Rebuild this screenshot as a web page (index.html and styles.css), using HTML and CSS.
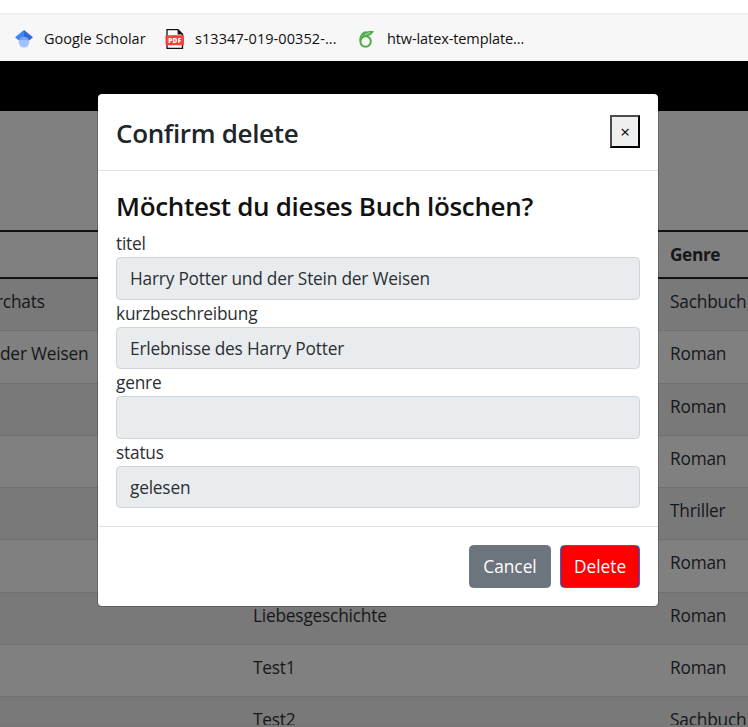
FILE: index.html
```html
<!DOCTYPE html>
<html lang="de">
<head>
<meta charset="utf-8">
<title>Confirm delete</title>
<link rel="stylesheet" href="styles.css">
</head>
<body>
<header class="bookmarks">
  <span class="bookmark scholar">
    <svg width="20" height="20" viewBox="0 0 20 20"><path fill="#4285f4" d="M10 1 1 8.3l5 4.2L10 8z"/><path fill="#3367d6" d="m10 1 9 7.3-5 4.2L10 8z"/><circle cx="10" cy="13.3" r="5.2" fill="#a0c3ff"/><path fill="#76a7fa" d="M5.2 11.1a5.3 5.3 0 0 1 9.6 0z"/></svg>
    <span class="label">Google Scholar</span>
  </span>
  <span class="bookmark pdf">
    <svg width="20" height="22" viewBox="0 0 20 22"><path fill="#fff" stroke="#111" stroke-width="1.3" d="M2 1.7h11l4.5 4.5v14.1H2z"/><path fill="#111" d="M12.6 1.5v5H18z"/><rect x="0.5" y="7.3" width="18.5" height="10" rx="1" fill="#ff3e3e"/><text class="pdf-text" x="9.8" y="15">PDF</text></svg>
    <span class="label">s13347-019-00352-...</span>
  </span>
  <span class="bookmark latex">
    <svg width="17" height="20" viewBox="0 0 17 20"><g fill="none" stroke="#4fae47" stroke-width="2"><circle cx="7.6" cy="12.5" r="5.2"/><path d="M2.5 12C1.6 8 4 4.5 8 3"/></g><path fill="#4fae47" d="M4.8 6.3C6 2.5 9 1.7 16 2c-1.6 3-4 5.4-7.9 5-1.6-.2-2.9.4-4.2 2z"/><path fill="none" stroke="#f7f7f7" stroke-width=".6" d="M6.5 6 12 3.5"/></svg>
    <span class="label">htw-latex-template...</span>
  </span>
</header>
<main class="page">
  <div class="navbar"></div>
  <div class="table">
    <div class="row head"><span></span><span></span><span>Genre</span></div>
    <div class="row odd"><span class="chats">rchats</span><span></span><span>Sachbuch</span></div>
    <div class="row tall"><span>der Weisen</span><span></span><span>Roman</span></div>
    <div class="row odd"><span></span><span></span><span>Roman</span></div>
    <div class="row"><span></span><span></span><span>Roman</span></div>
    <div class="row odd"><span></span><span></span><span>Thriller</span></div>
    <div class="row tall"><span></span><span></span><span>Roman</span></div>
    <div class="row odd"><span></span><span>Liebesgeschichte</span><span>Roman</span></div>
    <div class="row"><span></span><span>Test1</span><span>Roman</span></div>
    <div class="row odd"><span></span><span>Test2</span><span>Sachbuch</span></div>
  </div>
  <div class="page-edge"></div>
</main>
<section class="modal" role="dialog">
  <div class="modal-header"><h4>Confirm delete</h4><button class="close">×</button></div>
  <div class="modal-body">
    <h4 class="question">Möchtest du dieses Buch löschen?</h4>
    <div class="field"><label>titel</label><div class="control">Harry Potter und der Stein der Weisen</div></div>
    <div class="field short"><label>kurzbeschreibung</label><div class="control">Erlebnisse des Harry Potter</div></div>
    <div class="field"><label>genre</label><div class="control"></div></div>
    <div class="field short"><label>status</label><div class="control">gelesen</div></div>
  </div>
  <div class="modal-footer"><button class="btn cancel">Cancel</button><button class="btn delete">Delete</button></div>
</section>
</body>
</html>
```
FILE: styles.css
```css
* { box-sizing: border-box; }
body { margin: 0; width: 748px; height: 727px; overflow: hidden; position: relative; background: #fff; font: 17.3px/27px "Open Sans", "Noto Sans", sans-serif; letter-spacing: -0.2px; color: #2b2f33; }
.bookmarks { margin-top: 13px; height: 48px; background: #f7f7f7; border-top: 2px solid #f0f0f0; display: flex; padding-left: 14px; font-size: 14.5px; line-height: 20px; color: #111; letter-spacing: 0; }
.bookmark { display: flex; align-items: center; height: 48px; white-space: nowrap; }
.bookmark svg { flex: none; }
.scholar { width: 151px; gap: 10px; }
.pdf { width: 193px; gap: 10px; letter-spacing: 0.07px; }
.latex { gap: 12px; letter-spacing: -0.1px; }
.pdf-text { font: 800 6.5px "Open Sans", sans-serif; letter-spacing: .3px; fill: #fff; text-anchor: middle; }
.page { height: 666px; background: #808080; overflow: hidden; color: #151719; }
.navbar { height: 50px; background: #000; }
.table { margin-top: 119px; height: 495px; overflow: hidden; border-top: 2px solid #101214; }
.row { display: grid; grid-template-columns: 253px 417px 78px; height: 52px; padding-top: 9px; border-bottom: 1px solid #6f7071; white-space: nowrap; }
.row.tall { height: 53px; }
.row.odd { background: #797979; }
.row.head { height: 47px; border-bottom: 2px solid #101214; font-weight: 700; letter-spacing: -0.4px; }
.chats { margin-left: -4px; }
.page-edge { height: 2px; background: #777; }
.modal { position: absolute; left: 97px; top: 93px; width: 562px; height: 514px; background: #fff; background-clip: padding-box; border: 1px solid rgba(0,0,0,.2); border-radius: 5px; }
h4 { margin: 0; font-size: 26px; line-height: 32px; font-weight: 600; letter-spacing: -0.33px; color: #212529; }
.modal-header { height: 77px; padding: 21px 18px 0; border-bottom: 1px solid #dee2e6; display: flex; justify-content: space-between; align-items: flex-start; }
.modal-header h4 { padding-top: 2px; }
.close { width: 30px; height: 33px; padding: 0; background: #efefef; border: 2px outset #000; border-color: #4c4c4c #000 #000 #4c4c4c; font: 17px/20px "Open Sans", sans-serif; color: #000; }
.modal-body { height: 355px; padding: 19px 18px 0; }
h4.question { color: #111; height: 40px; }
.field { height: 70px; }
.field.short { height: 69px; }
.field label { display: block; height: 27px; }
.control { height: 43px; padding: 7px 13px; background: #e9ecef; border: 1px solid #ced4da; border-radius: 4.5px; }
.short .control { height: 42px; }
.modal-footer { height: 80px; padding: 18px; border-top: 1px solid #dee2e6; display: flex; justify-content: flex-end; gap: 9px; }
.btn { height: 43px; padding: 0; border: 1px solid #6c757d; border-radius: 4.5px; background: #6c757d; color: #fff; font: 17.3px/27px "Open Sans", sans-serif; letter-spacing: 0; }
.cancel { width: 82px; }
.delete { width: 80px; background: #f00; border-color: #0d6efd; }
```
